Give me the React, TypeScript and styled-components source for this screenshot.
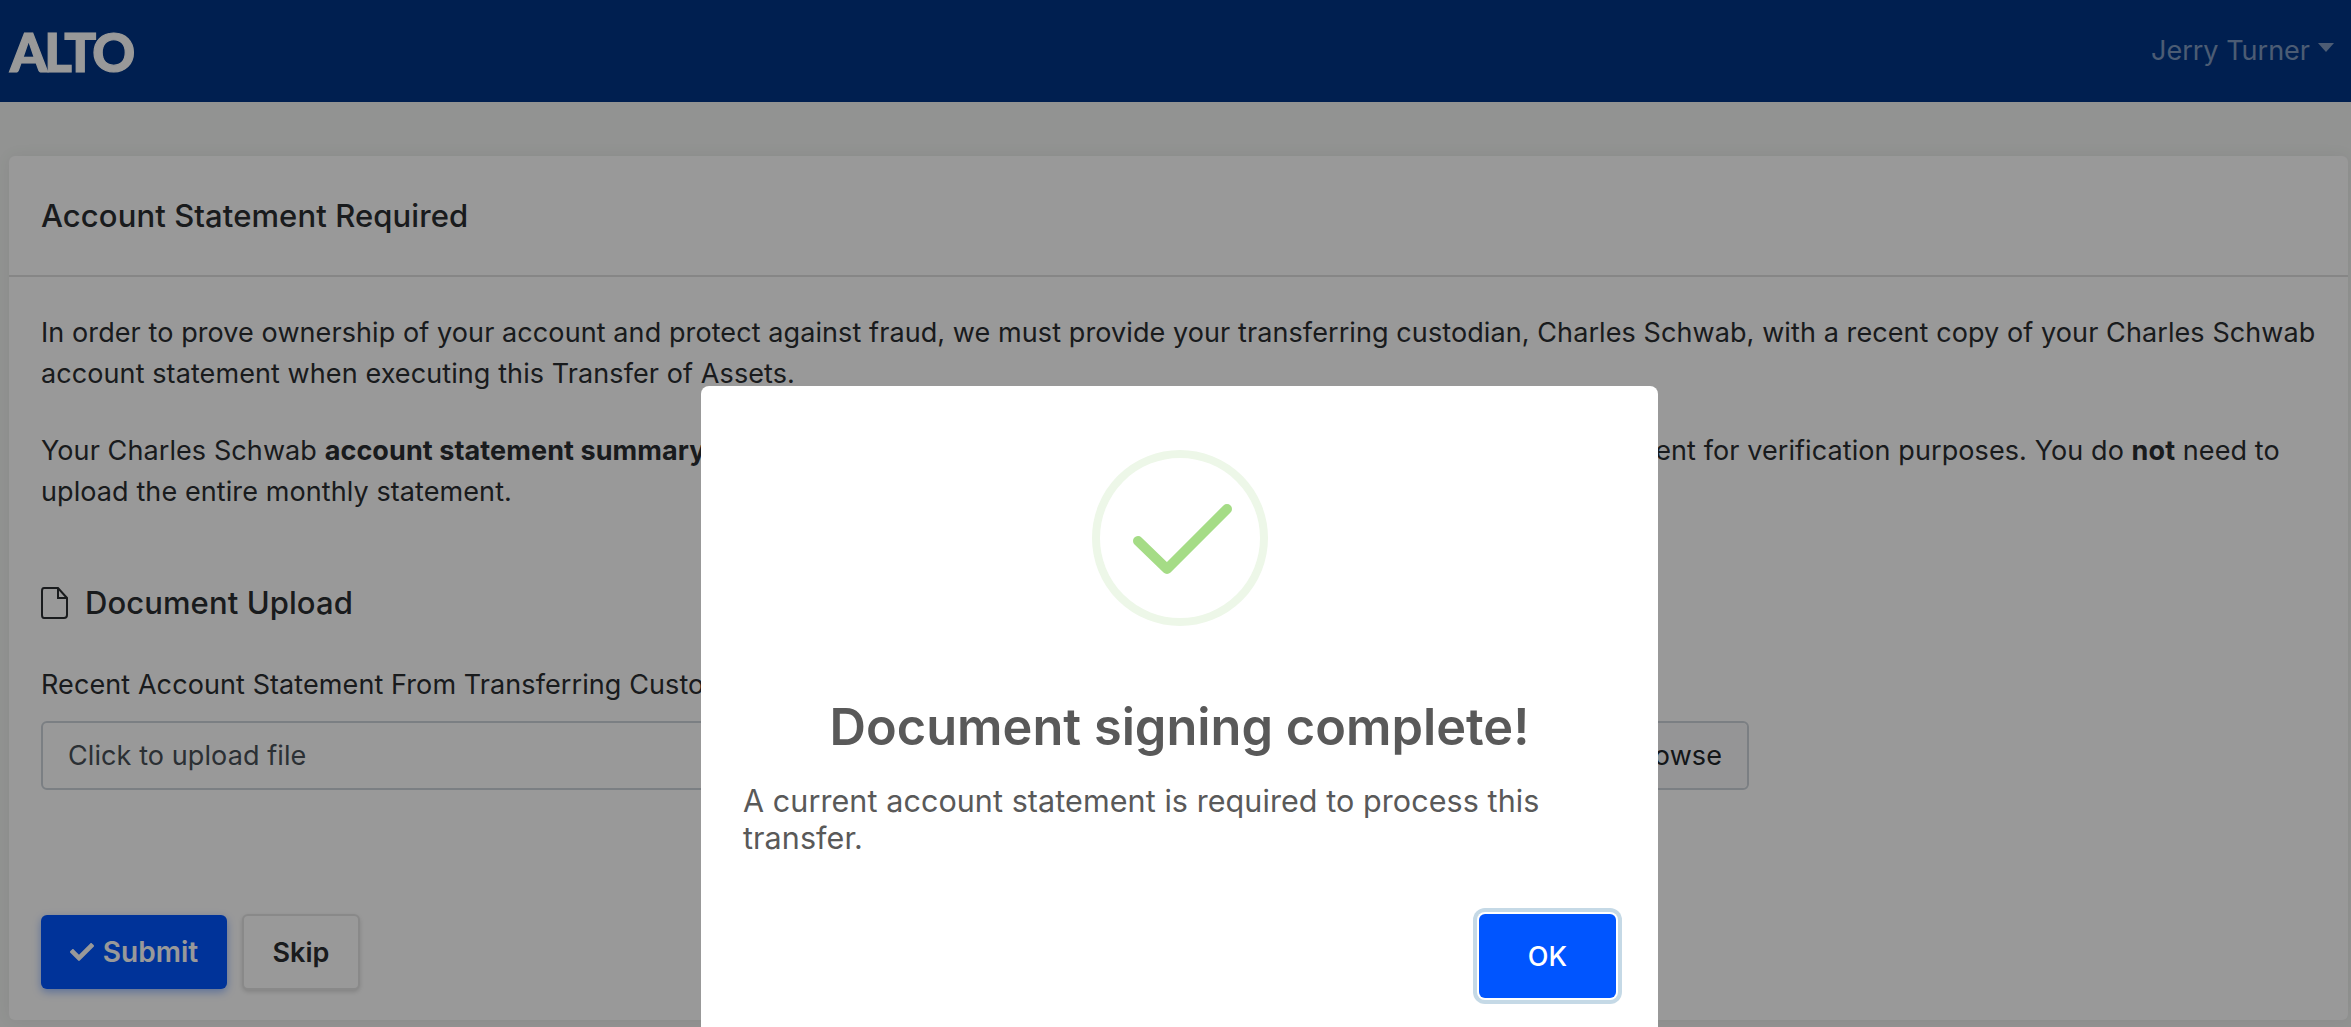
import React from 'react';
import styled, { createGlobalStyle } from 'styled-components';
import { FaCheck } from 'react-icons/fa';

const GlobalStyle = createGlobalStyle`
  html, body {
    margin: 0;
    padding: 0;
    height: 100%;
    overflow: hidden;
    background: #f3f5f3;
    font-family: Inter, "Liberation Sans", sans-serif;
    color: #2b2e31;
  }
  * {
    box-sizing: border-box;
  }
`;

function App() {
  return (
    <Page>
      <GlobalStyle />
      <Navbar>
        <Logo>ALTO</Logo>
        <UserMenu>
          Jerry Turner
          <Caret />
        </UserMenu>
      </Navbar>

      <Content>
        <Card>
          <CardHeader>Account Statement Required</CardHeader>
          <CardBody>
            <Paragraph>
              In order to prove ownership of your account and protect against fraud, we must provide
              your transferring custodian, Charles Schwab, with a recent copy of your Charles Schwab
              account statement when executing this Transfer of Assets.
            </Paragraph>
            <Paragraph>
              Your Charles Schwab <b>account statement summary</b> page, typically the first page of your
              Charles Schwab document, is sufficient for verification purposes. You do <b>not</b> need
              to upload the entire monthly statement.
            </Paragraph>

            <SectionTitle>
              <DocIcon viewBox="0 0 27 32">
                <path d="M3 1 H17 L26 11 V28 Q26 31 23 31 H3 Q1 31 1 28 V4 Q1 1 3 1 Z M17 1 V11 H26" />
              </DocIcon>
              Document Upload
            </SectionTitle>

            <FieldLabel>Recent Account Statement From Transferring Custodian</FieldLabel>
            <FileInput>
              <span>Click to upload file</span>
              <BrowseButton>Browse</BrowseButton>
            </FileInput>

            <Actions>
              <SubmitButton>
                <FaCheck size={24} />
                Submit
              </SubmitButton>
              <SkipButton>Skip</SkipButton>
            </Actions>
          </CardBody>
        </Card>
      </Content>

      <Overlay>
        <Modal>
          <SuccessIcon viewBox="0 0 176 176">
            <circle cx="88" cy="88" r="84" fill="none" stroke="#edf7e8" strokeWidth="8" />
            <path
              d="M46 91 L75 119 L135 59"
              fill="none"
              stroke="#a5dc86"
              strokeWidth="10"
              strokeLinecap="round"
              strokeLinejoin="round"
            />
          </SuccessIcon>
          <ModalTitle>Document signing complete!</ModalTitle>
          <ModalText>A current account statement is required to process this transfer.</ModalText>
          <ModalActions>
            <OkButton>OK</OkButton>
          </ModalActions>
        </Modal>
      </Overlay>
    </Page>
  );
}

export default App;

const Page = styled.div`
  position: relative;
  height: 1027px;
  overflow: hidden;
`;
const Navbar = styled.header`
  height: 102px;
  background: #003585;
  padding: 0 17px 0 10px;
  display: flex;
  align-items: center;
  justify-content: space-between;
`;
const Logo = styled.div`
  font-family: Lato, Inter, sans-serif;
  font-weight: 900;
  font-size: 53px;
  line-height: 1;
  letter-spacing: -3px;
  color: #fff;
  -webkit-text-stroke: 1.2px #fff;
`;
const UserMenu = styled.div`
  display: flex;
  align-items: center;
  margin-bottom: 2px;
  font-size: 27px;
  color: rgba(255, 255, 255, 0.5);
`;
const Caret = styled.span`
  width: 0;
  height: 0;
  margin: 0 0 6px 8px;
  border-top: 9px solid rgba(255, 255, 255, 0.5);
  border-left: 8px solid transparent;
  border-right: 8px solid transparent;
`;
const Content = styled.main`
  padding: 54px 3px 0 9px;
`;
const Card = styled.section`
  height: 864px;
  background: #fff;
  border-radius: 6px;
  box-shadow: 0 0 16px rgba(0, 0, 0, 0.06);
`;
const CardHeader = styled.div`
  height: 121px;
  padding: 0 32px;
  display: flex;
  align-items: center;
  font-size: 31px;
  font-weight: 500;
  letter-spacing: 0.1px;
  border-bottom: 2px solid rgba(0, 0, 0, 0.125);
`;
const CardBody = styled.div`
  padding: 35px 32px 0;
  font-size: 27px;
  line-height: 41px;
  letter-spacing: 0.09px;
`;
const Paragraph = styled.p`
  margin: 0 0 36px;
  b {
    font-weight: 700;
  }
`;
const SectionTitle = styled.h3`
  margin: 68px 0 0;
  display: flex;
  align-items: center;
  gap: 17px;
  font-size: 31px;
  font-weight: 500;
  line-height: 46px;
`;
const DocIcon = styled.svg`
  width: 27px;
  height: 32px;
  flex: none;
  fill: none;
  stroke: currentColor;
  stroke-width: 2;
`;
const FieldLabel = styled.div`
  margin-top: 38px;
  height: 41px;
`;
const FileInput = styled.div`
  margin-top: 16px;
  width: 1708px;
  height: 69px;
  padding-left: 25px;
  display: flex;
  align-items: center;
  justify-content: space-between;
  border: 2px solid #ced4da;
  border-radius: 6px;
  color: #495057;
`;
const BrowseButton = styled.span`
  height: 100%;
  padding: 0 25px;
  display: flex;
  align-items: center;
  background: #f8f9fa;
  border-radius: 0 5px 5px 0;
  color: #212529;
`;
const Actions = styled.div`
  margin-top: 124px;
  display: flex;
  align-items: center;
  gap: 15px;
`;
const SubmitButton = styled.button`
  width: 186px;
  height: 74px;
  display: flex;
  align-items: center;
  justify-content: center;
  gap: 9px;
  border: none;
  border-radius: 6px;
  background: #0055ff;
  color: #fff;
  font: 600 28px Inter, sans-serif;
  box-shadow: 0 3px 8px rgba(0, 85, 255, 0.4);
`;
const SkipButton = styled.button`
  width: 118px;
  height: 76px;
  border: 2px solid rgba(0, 0, 0, 0.1);
  border-radius: 6px;
  background: #fff;
  color: #2b2e31;
  font: 600 27px Inter, sans-serif;
  box-shadow: 0 2px 4px rgba(0, 0, 0, 0.15);
`;
const Overlay = styled.div`
  position: absolute;
  inset: 0;
  background: rgba(0, 0, 0, 0.4);
  display: flex;
  justify-content: center;
  padding: 386px 0 0 8px;
`;
const Modal = styled.div`
  width: 957px;
  height: 700px;
  padding: 64px 42px 0;
  background: #fff;
  border-radius: 8px;
  display: flex;
  flex-direction: column;
  align-items: center;
  color: #595959;
`;
const SuccessIcon = styled.svg`
  width: 176px;
  height: 176px;
  flex: none;
`;
const ModalTitle = styled.h2`
  margin: 66px 0 0;
  font-size: 50.5px;
  line-height: 70px;
  font-weight: 600;
  text-align: center;
`;
const ModalText = styled.div`
  margin-top: 20px;
  align-self: stretch;
  font-size: 30.5px;
  line-height: 37px;
  letter-spacing: 0.08px;
`;
const ModalActions = styled.div`
  margin-top: 58px;
  align-self: stretch;
  display: flex;
  justify-content: flex-end;
`;
const OkButton = styled.button`
  width: 137px;
  height: 84px;
  border: none;
  border-radius: 6px;
  background: #0055ff;
  color: #fff;
  font: 500 27px Inter, sans-serif;
  box-shadow: 0 0 0 2px #fff, 0 0 0 6px #c5d9e6;
`;
